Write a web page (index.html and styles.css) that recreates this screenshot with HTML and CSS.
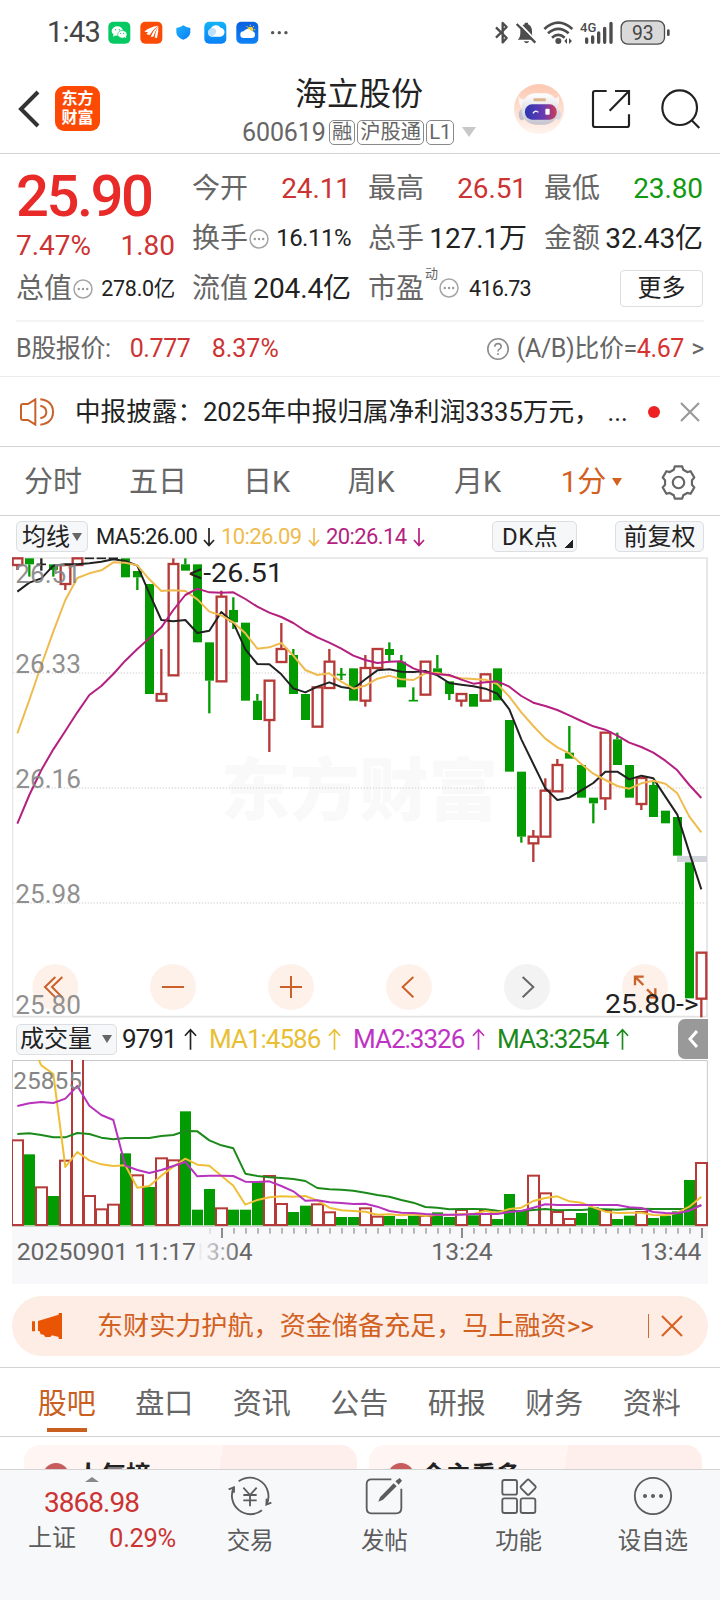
FILE: index.html
```
<!DOCTYPE html>
<html lang="zh-CN">
<head>
  <meta charset="UTF-8">
  <meta name="viewport" content="width=device-width, initial-scale=1.0">
  <title>海立股份 600619</title>
  <link rel="stylesheet" href="styles.css">
</head>
<body>
  <svg class="defs" width="0" height="0">
    <symbol id="arrow-down" viewBox="0 0 12 20"><path d="M6 1v17M1 13l5 5.5 5-5.5" fill="none" stroke="currentColor" stroke-width="1.7"/></symbol>
    <symbol id="arrow-up" viewBox="0 0 14 24"><path d="M7 23V2M1 8l6-6.5L13 8" fill="none" stroke="currentColor" stroke-width="1.8"/></symbol>
    <symbol id="more-dots" viewBox="0 0 20 20"><circle cx="10" cy="10" r="9" fill="none" stroke="#a5a5a5" stroke-width="1.5"/><g fill="#999"><circle cx="5.8" cy="10" r="1.2"/><circle cx="10" cy="10" r="1.2"/><circle cx="14.2" cy="10" r="1.2"/></g></symbol>
  </svg>

  <div class="status-bar">
    <span class="clock">1:43</span>
    <svg class="status-apps" viewBox="320 55 550 80">
      <defs>
        <linearGradient id="cloud" x1="0" y1="0" x2="0" y2="1"><stop offset="0" stop-color="#12b4f5"/><stop offset="1" stop-color="#0a80f8"/></linearGradient>
        <linearGradient id="sky" x1="0" y1="0" x2="0" y2="1"><stop offset="0" stop-color="#0a5ee0"/><stop offset="1" stop-color="#0f83f5"/></linearGradient>
        <linearGradient id="shield" x1="0" y1="0" x2="1" y2="1"><stop offset="0" stop-color="#1fb2fb"/><stop offset="1" stop-color="#0a7df5"/></linearGradient>
      </defs>
      <rect x="324" y="63" width="66" height="66" rx="15" fill="#07c964"/>
      <ellipse cx="351" cy="91" rx="17" ry="14" fill="#fff"/>
      <path d="M340 100l-2 8 9-4z" fill="#fff"/>
      <ellipse cx="366" cy="101" rx="14" ry="11.5" fill="#fff" stroke="#07c964" stroke-width="2"/>
      <path d="M372 109l6 4-2-8z" fill="#fff"/>
      <g fill="#07c964"><circle cx="346" cy="87" r="2"/><circle cx="357" cy="87" r="2"/><circle cx="361" cy="98" r="1.8"/><circle cx="370" cy="98" r="1.8"/></g>
      <rect x="420" y="63" width="66" height="66" rx="15" fill="#fa4c06"/>
      <path d="M432 93q14-14 41-18q-17 7-30 20zM438 101q13-18 35-26q-16 12-25 28zM451 108q8-20 23-33q-9 16-15 33zM463 110q3-18 11-35q1 18-4 38z" fill="#fff"/>
      <path d="M549 74q9 7 21 8v14q-2 14-21 21q-19-7-21-21V82q12-1 21-8z" fill="url(#shield)"/>
      <rect x="612" y="63" width="66" height="66" rx="15" fill="url(#cloud)"/>
      <path d="M634 108a12 12 0 0 1-3-23a17 17 0 0 1 30-4a13 13 0 0 1-4 27z" fill="#fff"/>
      <path d="M634 108a13 13 0 1 1 14-18q-2 14-14 18z" fill="#bfe0fd"/>
      <rect x="708" y="63" width="66" height="66" rx="15" fill="url(#sky)"/>
      <circle cx="750" cy="87" r="9" fill="#f7c93c"/>
      <path d="M750 72v4M761 76l-3 4M765 87h-4M739 76l3 4M761 98l-3-3" stroke="#f7c93c" stroke-width="3"/>
      <path d="M730 112a10 10 0 0 1 0-20a14 14 0 0 1 24 0a10 10 0 0 1 0 20z" fill="#fff"/>
      <g fill="#555"><circle cx="817" cy="96" r="5"/><circle cx="837" cy="96" r="5"/><circle cx="857" cy="96" r="5"/></g>
    </svg>
    <svg class="status-signals" viewBox="400 55 540 80">
      <path d="M409 80l32 32-12 13V67l12 12-32 32" fill="none" stroke="#4d4d4d" stroke-width="7" stroke-linejoin="round"/>
      <path d="M474 117q8-6 8-20v-8q1-17 18-20q16 3 17 20v8q0 14 8 20z" fill="#4d4d4d"/>
      <path d="M492 122h17q-8 12-17 0zM495 66h10v6h-10z" fill="#4d4d4d"/>
      <path d="M477 66l54 56" stroke="#fff" stroke-width="6"/><path d="M471 70l56 56" stroke="#4d4d4d" stroke-width="7"/>
      <g fill="none" stroke="#4d4d4d" stroke-width="8"><path d="M554 85q42-38 84 0M565 98q31-27 62 0M577 111q19-17 38 0"/></g>
      <circle cx="596" cy="121" r="9" fill="#4d4d4d"/>
      <path d="M622 112v18l-8-9zM628 112v18l9-9z" fill="#4d4d4d"/>
      <text x="661" y="94" font-size="40" font-weight="500" textLength="49" lengthAdjust="spacingAndGlyphs" fill="#4d4d4d">4G</text>
      <g stroke="#4d4d4d" stroke-width="10" stroke-linecap="round"><path d="M681 115v10M699 109v16M717 97v28M735 83v42M754 68v57"/></g>
      <rect x="784.500" y="60.500" width="130" height="70" rx="20" fill="#d9d9d9" stroke="#4d4d4d" stroke-width="4"/>
      <path d="M926 90v12" stroke="#4d4d4d" stroke-width="8" stroke-linecap="round"/>
      <text x="817" y="118" font-size="62" textLength="65" lengthAdjust="spacingAndGlyphs" fill="#444">93</text>
    </svg>
  </div>

  <header class="header">
    <svg class="back" viewBox="0 0 22 38"><path d="M20 2L3 19l17 17" fill="none" stroke="#333" stroke-width="4"/></svg>
    <div class="logo">东方<br>财富</div>
    <div class="title">
      <h1>海立股份</h1>
      <div class="subtitle"><span class="code">600619</span><span class="tag">融</span><span class="tag">沪股通</span><span class="tag">L1</span><i class="caret"></i></div>
    </div>
    <svg class="robot" viewBox="0 0 150 150">
      <defs>
        <linearGradient id="peach" x1="0" y1="0" x2="0" y2="1"><stop offset="0" stop-color="#fcc8b0"/><stop offset="1" stop-color="#fff4ef"/></linearGradient>
        <linearGradient id="visor"><stop offset="0" stop-color="#2b35b4"/><stop offset=".6" stop-color="#6a3bb0"/><stop offset="1" stop-color="#d23a55"/></linearGradient>
        <linearGradient id="head" x1="0" y1="0" x2="0" y2="1"><stop offset="0" stop-color="#fff"/><stop offset="1" stop-color="#c6c4cf"/></linearGradient>
      </defs>
      <circle cx="75" cy="75" r="75" fill="url(#peach)"/>
      <ellipse cx="24" cy="92" rx="10" ry="17" fill="#c3c2cb"/><ellipse cx="132" cy="92" rx="9" ry="15" fill="#d9d8e0"/>
      <path d="M14 35q6 14 20 10l12 4-22 24Q12 60 14 35zM134 35q-6 12-18 8l-12 6 22 22q14-16 8-36z" fill="#fbf6f5"/>
      <rect x="23" y="28" width="110" height="94" rx="42" fill="url(#head)"/>
      <rect x="58" y="43" width="38" height="9" rx="4" fill="#dcb48c"/>
      <rect x="33" y="61" width="95" height="46" rx="21" fill="url(#visor)"/>
      <path d="M57 88q8-12 16-3" fill="none" stroke="#fff" stroke-width="4"/><rect x="94" y="74" width="13" height="18" rx="3" fill="#fff"/>
    </svg>
    <svg class="share" viewBox="0 0 120 120"><g fill="none" stroke="#222" stroke-width="6.500"><path d="M47 6H12q-6 0-6 6v96q0 6 6 6h96q6 0 6-6V76"/><path d="M72 6h42v42M114 6L56 65"/></g></svg>
    <svg class="search" viewBox="0 0 120 120"><g fill="none" stroke="#222" stroke-width="6.500"><circle cx="56" cy="56" r="52"/><path d="M92 94l23 23"/></g></svg>
  </header>

  <section class="quote">
    <div class="quote-main">
      <div class="price">25.90</div>
      <div class="change"><span>7.47%</span><span>1.80</span></div>
      <div class="cell"><label>总值</label><svg class="dots"><use href="#more-dots"/></svg><b class="small">278.0亿</b></div>
    </div>
    <div class="quote-grid">
      <div class="cell"><label>今开</label><b class="up">24.11</b></div>
      <div class="cell"><label>最高</label><b class="up">26.51</b></div>
      <div class="cell"><label>最低</label><b class="down">23.80</b></div>
      <div class="cell"><label>换手</label><svg class="dots"><use href="#more-dots"/></svg><b class="mid">16.11%</b></div>
      <div class="cell"><label>总手</label><b>127.1万</b></div>
      <div class="cell"><label>金额</label><b>32.43亿</b></div>
      <div class="cell"><label>流值</label><b>204.4亿</b></div>
      <div class="cell"><label>市盈</label><sup>动</sup><svg class="dots"><use href="#more-dots"/></svg><b class="small pe">416.73</b></div>
      <div class="cell"><button class="more">更多</button></div>
    </div>
  </section>

  <div class="bshare">
    <span>B股报价:</span><span class="red b-price">0.777</span><span class="red b-pct">8.37%</span>
    <svg class="help" viewBox="0 0 22 22"><circle cx="11" cy="11" r="10.200" fill="none" stroke="#8c8c8c" stroke-width="1.600"/><path d="M7.800 8.800q0-3.200 3.200-3.200t3.200 3q0 1.600-1.700 2.500t-1.500 2.400" fill="none" stroke="#8c8c8c" stroke-width="1.600"/><circle cx="11" cy="16" r="1" fill="#8c8c8c"/></svg>
    <span class="ratio">(A/B)比价=<em>4.67</em></span><span class="gt">&gt;</span>
  </div>

  <div class="notice">
    <svg class="speaker" viewBox="0 0 102 84"><g fill="none" stroke="#c9622a" stroke-width="6"><path d="M46 4v76L24 66H9q-6 0-6-6V24q0-6 6-6h15z"/><path d="M61 23q18 4 18 19T61 61M61 4q38 5 38 38T61 80"/></g></svg>
    <p>中报披露：2025年中报归属净利润3335万元，<span class="ellipsis">...</span></p>
    <i class="dot"></i>
    <svg class="close" viewBox="0 0 20 20"><path d="M1 1l18 18M19 1L1 19" stroke="#999" stroke-width="2.200"/></svg>
  </div>

  <nav class="periods">
    <span>分时</span><span>五日</span><span>日K</span><span>周K</span><span>月K</span>
    <span class="active">1分<i></i></span>
    <span><svg class="gear" viewBox="-52 -52 104 104"><g fill="none" stroke="#666" stroke-width="6.500" stroke-linejoin="round"><path d="M11-48L14-38L26-31L36-33.500L47-14.500L40-7V7L47 14.500L36 33.500L26 31L14 38L11 48H-11L-14 38L-26 31L-36 33.500L-47 14.500L-40 7V-7L-47-14.500L-36-33.500L-26-31L-14-38L-11-48Z"/><circle r="17"/></g></svg></span>
  </nav>

  <div class="ma-bar">
    <span class="chip ma-select">均线<i></i></span>
    <span class="ma ma5">MA5:26.00<svg><use href="#arrow-down"/></svg></span>
    <span class="ma ma10">10:26.09<svg><use href="#arrow-down"/></svg></span>
    <span class="ma ma20">20:26.14<svg><use href="#arrow-down"/></svg></span>
    <span class="chip dk">DK点</span>
    <span class="chip fq">前复权</span>
  </div>
  <svg id="kline" class="kline" viewBox="36 321 2088 1383"></svg>

  <div class="vol-bar">
    <span class="chip vol-select">成交量<i></i></span>
    <span class="vol">9791<svg><use href="#arrow-up"/></svg></span>
    <span class="vol v1">MA1:4586<svg><use href="#arrow-up"/></svg></span>
    <span class="vol v2">MA2:3326<svg><use href="#arrow-up"/></svg></span>
    <span class="vol v3">MA3:3254<svg><use href="#arrow-up"/></svg></span>
    <span class="expand"><svg viewBox="0 0 10 18"><path d="M9 1L2 9l7 8" fill="none" stroke="#fff" stroke-width="3"/></svg></span>
  </div>
  <svg id="volume" class="volume" viewBox="36 120 2088 501"></svg>
  <svg id="axis" class="axis" viewBox="36 621 2088 171"></svg>

  <div class="promo">
    <svg class="horn" viewBox="0 0 90 78"><path d="M0 25h9v30H0zM18 24L80 5V0h10v78H80v-6l-20-5-5 5H40l-5-7-9-1-3-9-5-1z" fill="#ea5504"/></svg>
    <span class="promo-text">东财实力护航，资金储备充足，马上融资&gt;&gt;</span>
    <i class="sep"></i>
    <svg class="promo-close" viewBox="0 0 22 22"><path d="M1 1l20 20M21 1L1 21" stroke="#d96327" stroke-width="2.200"/></svg>
  </div>

  <nav class="tabs">
    <span class="active">股吧</span><span>盘口</span><span>资讯</span><span>公告</span><span>研报</span><span>财务</span><span>资料</span>
  </nav>

  <div class="cards">
    <div class="card"><i></i>人气榜</div>
    <div class="card"><i></i>今主看多</div>
  </div>

  <footer class="bottom-nav">
    <div class="index">
      <i></i>
      <div class="index-value">3868.98</div>
      <div class="index-row"><span>上证</span><span class="red">0.29%</span></div>
    </div>
    <div class="item">
      <svg class="nav-icon" viewBox="-66 -60 132 120"><g fill="none" stroke="#5c5c5c" stroke-width="5.500"><path d="M-34-44A56 56 0 0 1 50 25M36 43A56 56 0 0 1-48-27"/><path d="M64 20L49 26L50 8M-64-20L-48-26V-10"/><path d="M-20-25L0-3L20-25M0-3V31M-20-3H20M-20 13H20"/></g></svg>
      <span>交易</span>
    </div>
    <div class="item">
      <svg class="nav-icon" viewBox="-66 -60 132 120"><g fill="none" stroke="#5c5c5c" stroke-width="5.500"><path d="M22-50H-38q-14 0-14 14V36q0 16 14 16H36q16 0 16-16V-22"/></g><path d="M-17 17L-12 4L29-38L38-29L-3 11zM34-44L47-54L54-46L44-34z" fill="#5c5c5c"/></svg>
      <span>发帖</span>
    </div>
    <div class="item">
      <svg class="nav-icon" viewBox="-66 -60 132 120"><g fill="none" stroke="#5c5c5c" stroke-width="5.500"><rect x="-50" y="-48" width="44" height="44" rx="6"/><rect x="-50" y="7" width="44" height="44" rx="6"/><rect x="5" y="7" width="44" height="44" rx="6"/><rect x="10" y="-44" width="35" height="35" rx="5" transform="rotate(45 27.500 -26.500)"/></g></svg>
      <span>功能</span>
    </div>
    <div class="item">
      <svg class="nav-icon" viewBox="-66 -60 132 120"><circle r="54.500" fill="none" stroke="#5c5c5c" stroke-width="5.500"/><g fill="#5c5c5c"><circle cx="-24" r="6"/><circle r="6"/><circle cx="24" r="6"/></g></svg>
      <span>设自选</span>
    </div>
  </footer>

  <script src="chart.js"></script>
</body>
</html>
```
FILE: styles.css
```
* {
  box-sizing: border-box;
}
body {
  margin: 0;
  width: 720px;
  height: 1600px;
  overflow: hidden;
  background: #fff;
  color: #222;
  font-family: Roboto, "Noto Sans CJK SC", sans-serif;
  font-size: 24px;
}
svg {
  display: block;
  flex: none;
}
i {
  display: block;
  flex: none;
}
.defs {
  position: absolute;
}
.red {
  color: #cc3333;
}

/* status bar */
.status-bar {
  display: flex;
  align-items: center;
  height: 64px;
  padding-left: 47px;
}
.clock {
  width: 60px;
  font-size: 29px;
  line-height: 64px;
  letter-spacing: -0.700px;
  color: #444;
}
.status-apps {
  width: 183.3px;
  height: 26.7px;
}
.status-signals {
  width: 180px;
  height: 26.7px;
  margin-left: 203px;
}

/* header */
.header {
  display: flex;
  align-items: center;
  height: 90px;
  border-bottom: 1px solid #d3d3d3;
}
.back {
  width: 22px;
  height: 38px;
  margin-left: 18px;
}
.logo {
  width: 45px;
  height: 45px;
  margin-left: 15px;
  padding-top: 4px;
  border-radius: 9px;
  background: #fc4a04;
  color: #fff;
  font-size: 16px;
  font-weight: 700;
  line-height: 18.5px;
  text-align: center;
}
.title {
  flex: 1;
  padding: 3px 0 0 142px;
}
.title h1 {
  margin: 0;
  padding-left: 53px;
  font-size: 32px;
  font-weight: 400;
  line-height: 44px;
}
.subtitle {
  display: flex;
  align-items: center;
  height: 33px;
  color: #666;
}
.code {
  width: 87px;
  font-size: 25px;
  letter-spacing: -0.100px;
}
.tag {
  height: 25px;
  margin-right: 2px;
  padding: 0 2px;
  border: 1px solid #888;
  border-radius: 5px;
  font-size: 20.300px;
  line-height: 22px;
}
.caret {
  margin-left: 6px;
  border: 7px solid transparent;
  border-top: 10px solid #c8c8c8;
  border-bottom: 0;
}
.robot {
  width: 50px;
  height: 50px;
}
.share {
  width: 40px;
  height: 40px;
  margin-left: 27px;
}
.search {
  width: 40px;
  height: 40px;
  margin: 0 19px 0 30px;
}

/* quote */
.quote {
  display: flex;
  gap: 17px;
  height: 168px;
  margin: 0 16px;
  padding-top: 10px;
  border-bottom: 2px solid #f4f4f6;
}
.quote-main {
  width: 159px;
}
.quote-grid {
  flex: 1;
  display: grid;
  grid-template-columns: repeat(3, 159px);
  grid-auto-rows: 49.700px;
  column-gap: 17px;
}
.price {
  height: 65px;
  font-size: 58px;
  font-weight: 500;
  line-height: 64px;
  letter-spacing: -2.500px;
  color: #e82a28;
}
.change {
  display: flex;
  justify-content: space-between;
  height: 35px;
  font-size: 28px;
  line-height: 34px;
  color: #cc3333;
}
.cell {
  display: flex;
  align-items: center;
  height: 49.700px;
  line-height: 49px;
  white-space: nowrap;
}
.cell label {
  font-size: 28px;
  color: #666;
}
.cell b {
  margin-left: auto;
  font-size: 28px;
  font-weight: 400;
  letter-spacing: -0.100px;
}
.cell b.mid {
  font-size: 24px;
  letter-spacing: -0.500px;
}
.cell b.small {
  font-size: 21.500px;
  letter-spacing: -0.300px;
}
.cell b.pe {
  margin: 0 auto 0 10px;
  letter-spacing: -0.700px;
}
.cell b.up {
  color: #cc3333;
}
.cell b.down {
  color: #119911;
}
.cell sup {
  align-self: flex-start;
  margin-left: 1px;
  font-size: 13px;
  line-height: 22px;
  color: #666;
}
.dots {
  width: 20px;
  height: 20px;
  margin-left: 1px;
}
.more {
  width: 83px;
  height: 37px;
  margin-left: auto;
  padding: 0;
  border: 1px solid #ddd;
  border-radius: 4px;
  background: #fff;
  color: #222;
  font: inherit;
  line-height: 33px;
}

/* B share row */
.bshare {
  display: flex;
  align-items: center;
  height: 55px;
  padding: 0 16px;
  border-bottom: 1px solid #ececec;
  font-size: 25px;
  line-height: 52px;
  color: #666;
  letter-spacing: -0.400px;
}
.b-price {
  width: 82px;
  margin-left: 19px;
}
.b-pct {
  letter-spacing: 0;
}
.help {
  width: 22px;
  height: 22px;
  margin: 0 8px 0 auto;
}
.ratio em {
  font-style: normal;
  color: #d6322f;
}
.gt {
  width: 20px;
  text-align: right;
}

/* notice */
.notice {
  display: flex;
  align-items: center;
  height: 70px;
  padding: 0 20px;
  border-bottom: 1px solid #d3d3d3;
}
.speaker {
  width: 34px;
  height: 28px;
}
.notice p {
  flex: 1;
  margin: 0 0 0 21px;
  font-size: 25.600px;
  line-height: 68px;
  white-space: nowrap;
}
.ellipsis {
  margin-left: 8px;
}
.dot {
  width: 12px;
  height: 12px;
  border-radius: 50%;
  background: #ee2222;
}
.close {
  width: 20px;
  height: 20px;
  margin-left: 20px;
}

/* period tabs */
.periods {
  display: grid;
  grid-template-columns: 106px 104px 113px 96px 117px 111px 63px;
  height: 69px;
  border-bottom: 1px solid #d3d3d3;
  font-size: 29px;
  line-height: 68px;
  color: #666;
}
.periods span {
  display: flex;
  align-items: center;
  justify-content: center;
  padding-top: 1px;
}
.periods .active {
  color: #d2601f;
}
.periods i {
  margin-left: 6px;
  border: 5px solid transparent;
  border-top: 8px solid #d2601f;
  border-bottom: 0;
}
.gear {
  width: 35px;
  height: 35px;
}

/* moving averages */
.ma-bar {
  display: flex;
  align-items: center;
  height: 41px;
  padding: 0 16px;
}
.chip {
  display: flex;
  align-items: center;
  height: 31px;
  border: 1px solid #dcdee2;
  border-radius: 5px;
  background: #f6f7f9;
  font-size: 24px;
  line-height: 28px;
  white-space: nowrap;
}
.chip i {
  border: 5px solid transparent;
  border-top: 8px solid #666;
  border-bottom: 0;
}
.ma-select {
  width: 72px;
  padding-left: 5px;
}
.ma-select i {
  margin-left: 2px;
}
.ma {
  display: flex;
  align-items: center;
  font-size: 22px;
  letter-spacing: -0.600px;
}
.ma svg {
  width: 12px;
  height: 20px;
  margin-left: 6px;
}
.ma5 {
  width: 125px;
  margin-left: 8px;
}
.ma10 {
  width: 105px;
  color: #f0bb4e;
}
.ma20 {
  width: 166px;
  color: #b51f80;
}
.dk {
  width: 85px;
  padding-left: 9px;
  letter-spacing: 0.500px;
  background: linear-gradient(135deg, transparent 50%, #222 50%) 72px 18px / 8px 8px no-repeat #f6f7f9;
}
.fq {
  width: 89px;
  margin-left: auto;
  justify-content: center;
}
.kline {
  width: 696px;
  height: 461px;
  margin-left: 12px;
}

/* volume */
.vol-bar {
  display: flex;
  align-items: center;
  height: 42px;
  padding: 0 12px 0 16px;
}
.vol-select {
  width: 101px;
  padding-left: 3px;
}
.vol-select i {
  margin-left: 10px;
}
.vol {
  display: flex;
  align-items: center;
  width: 144px;
  font-size: 26px;
  letter-spacing: -1px;
}
.vol svg {
  width: 13px;
  height: 23px;
  margin-left: 8px;
}
.vol-select + .vol {
  width: 87px;
  margin-left: 5px;
}
.v1 {
  color: #e8bf35;
}
.v2 {
  color: #bf33c4;
}
.v3 {
  color: #1b8a1b;
}
.expand {
  display: flex;
  align-items: center;
  justify-content: center;
  width: 30px;
  height: 40px;
  margin-left: auto;
  border-radius: 7px 0 0 7px;
  background: #999;
}
.expand svg {
  width: 10px;
  height: 18px;
}
.volume {
  width: 696px;
  height: 167px;
  margin-left: 12px;
}
.axis {
  width: 696px;
  height: 57px;
  margin-left: 12px;
  background: #f8f8fa;
}

/* promo banner */
.promo {
  display: flex;
  align-items: center;
  height: 60px;
  margin: 12px 12px 11px;
  padding: 0 25px 0 20px;
  border-radius: 30px;
  background: #fdede4;
  color: #d2601f;
}
.horn {
  width: 30px;
  height: 26px;
}
.promo-text {
  flex: 1;
  margin-left: 35px;
  font-size: 26.100px;
  line-height: 58px;
  white-space: nowrap;
}
.sep {
  width: 1px;
  height: 24px;
  margin-right: 12px;
  background: #cc6a35;
}
.promo-close {
  width: 22px;
  height: 22px;
}

/* content tabs */
.tabs {
  display: grid;
  grid-template-columns: repeat(7, 97.500px);
  height: 70px;
  padding-left: 18px;
  border-top: 1px solid #d3d3d3;
  border-bottom: 1px solid #d3d3d3;
  font-size: 29px;
  line-height: 72px;
  text-align: center;
  color: #666;
}
.tabs .active {
  color: #c9601f;
  background: linear-gradient(#c9601f, #c9601f) center 60px / 40px 4px no-repeat;
}

.cards {
  display: grid;
  grid-template-columns: 333px 333px;
  gap: 12px;
  height: 32px;
  padding: 8px 0 0 24px;
  overflow: hidden;
}
.card {
  display: flex;
  align-items: center;
  height: 62px;
  border-radius: 16px;
  background: linear-gradient(100deg, #fff5f3 58%, #ffefec 58%);
  font-size: 25px;
  font-weight: 700;
  line-height: 30px;
}
.card i {
  width: 26px;
  height: 26px;
  margin: 0 7px 0 19px;
  border-radius: 50%;
  background: #c85c5c;
}

/* bottom navigation */
.bottom-nav {
  display: grid;
  grid-template-columns: 183px repeat(4, 1fr);
  height: 131px;
  border-top: 1px solid #d3d3d3;
  background: #f7f8fa;
  color: #5c5c5c;
}
.index i {
  width: 14px;
  margin: 7px auto 0;
  border: 7px solid transparent;
  border-bottom: 5px solid #888;
  border-top: 0;
}
.index-value {
  font-size: 28px;
  line-height: 42px;
  text-align: center;
  letter-spacing: -1px;
  color: #cc3333;
}
.index-row {
  display: flex;
  justify-content: space-between;
  padding: 0 7px 0 28px;
  font-size: 24px;
  line-height: 28px;
}
.index-row .red {
  font-size: 25.500px;
  letter-spacing: -0.300px;
}
.item {
  display: flex;
  flex-direction: column;
  align-items: center;
  font-size: 23.500px;
  line-height: 34px;
}
.nav-icon {
  width: 44px;
  height: 40px;
  margin: 6px 0 8px;
}
```
FILE: chart.js
```
// all coordinates below are in viewBox units, 3 units = 1px
const STEP = 36;
const X0 = 52;
const RED = '#b53a38';
const GREEN = '#029c02';

// [type, high, top, bottom, low]
const candles = [
  ['r', 325, 325, 345, 360], ['g', 325, 325, 343, 380], ['k', 325, 343, 343, 362], ['g', 343, 343, 360, 380],
  ['r', 345, 345, 402, 420], ['r', 325, 325, 345, 345], ['k', 325, 325, 325, 325], ['k', 325, 325, 325, 325],
  ['k', 325, 325, 325, 325], ['g', 325, 325, 382, 382], ['g', 363, 363, 382, 420], ['g', 402, 402, 732, 732],
  ['r', 597, 732, 752, 752], ['r', 325, 342, 676, 676], ['g', 325, 343, 362, 362], ['g', 343, 343, 577, 577],
  ['g', 577, 577, 692, 790], ['r', 422, 440, 694, 694], ['g', 442, 480, 517, 537], ['g', 518, 518, 752, 752],
  ['g', 732, 752, 810, 810], ['r', 692, 692, 810, 906], ['r', 519, 597, 636, 636], ['g', 597, 615, 732, 732],
  ['g', 732, 732, 810, 810], ['r', 712, 712, 830, 830], ['r', 597, 635, 714, 714], ['g', 654, 674, 674, 690],
  ['g', 655, 655, 752, 752], ['r', 615, 654, 752, 770], ['r', 597, 597, 654, 654], ['g', 577, 597, 615, 633],
  ['g', 615, 635, 712, 712], ['g', 712, 752, 752, 752], ['r', 635, 635, 734, 734], ['g', 615, 655, 672, 672],
  ['g', 694, 694, 732, 750], ['r', 732, 732, 752, 770], ['g', 732, 732, 770, 770], ['r', 673, 673, 752, 752],
  ['g', 655, 655, 751, 751], ['g', 810, 810, 965, 965], ['g', 965, 965, 1160, 1178], ['r', 1140, 1160, 1180, 1236],
  ['r', 985, 1022, 1160, 1160], ['r', 927, 945, 1024, 1024], ['g', 828, 908, 926, 926], ['g', 945, 945, 1043, 1043],
  ['g', 1043, 1043, 1060, 1120], ['r', 848, 848, 1045, 1080], ['g', 848, 868, 945, 945], ['g', 945, 945, 1043, 1043],
  ['r', 984, 984, 1062, 1080], ['g', 993, 1005, 1101, 1101], ['g', 1082, 1082, 1120, 1120], ['g', 1101, 1101, 1217, 1217],
  ['g', 1237, 1237, 1645, 1645], ['r', 1508, 1508, 1646, 1702]
];

const ma5 = [425, 398, 385, 347, 343, 343, 340, 335, 328, 333, 347, 430, 510, 514, 510, 549, 542, 486, 518, 598,
  642, 643, 673, 715, 727, 710, 697, 711, 716, 688, 661, 658, 665, 666, 663, 676, 699, 704, 709, 716,
  731, 778, 868, 942, 1015, 1050, 1043, 1021, 999, 965, 965, 988, 977, 985, 1040, 1094, 1208, 1318];
const ma10 = [850, 750, 645, 545, 450, 384, 370, 361, 337, 338, 346, 388, 423, 421, 423, 448, 485, 496, 517, 550,
  596, 592, 579, 617, 660, 675, 670, 695, 716, 707, 686, 677, 688, 690, 670, 668, 678, 685, 687, 689,
  702, 740, 787, 828, 866, 892, 910, 942, 971, 990, 1008, 1016, 1000, 992, 1001, 1030, 1100, 1147];
const ma20 = [1121, 1035, 960, 898, 843, 787, 735, 708, 672, 632, 597, 565, 532, 480, 435, 416, 427, 428, 427, 447,
  470, 488, 501, 519, 543, 562, 578, 596, 617, 630, 639, 635, 634, 655, 667, 673, 675, 689, 701, 697,
  694, 710, 738, 758, 768, 780, 796, 813, 829, 839, 857, 878, 891, 908, 932, 961, 1005, 1044];

const volTypes = 'rgrgrrrrrgrgrrgggrgggrrggrrggrrgggrggrgrgggrrrrggrggrggggr';
const volTops = [361, 403, 502, 528, 422, 60, 528, 568, 554, 400, 466, 501, 415, 421, 274, 569, 507, 565, 569, 569,
  487, 468, 552, 576, 557, 553, 577, 591, 591, 565, 590, 588, 597, 587, 588, 577, 591, 570, 586, 570,
  597, 522, 572, 467, 520, 576, 597, 579, 562, 570, 597, 587, 576, 594, 587, 574, 480, 429];
const vma1 = [-150, 60, 136, 162, 441, 396, 421, 433, 438, 436, 503, 498, 467, 440, 416, 434, 437, 467, 497, 554,
  540, 532, 529, 530, 528, 541, 563, 571, 573, 575, 584, 583, 586, 583, 588, 584, 585, 582, 582, 573,
  578, 567, 563, 543, 534, 529, 544, 548, 562, 575, 579, 578, 578, 585, 586, 578, 560, 530];
const vma2 = [258, 250, 246, 249, 236, 198, 257, 285, 300, 437, 450, 459, 450, 438, 426, 469, 467, 467, 468, 485,
  486, 484, 498, 514, 542, 541, 547, 549, 552, 551, 560, 573, 578, 579, 582, 584, 584, 584, 582, 582,
  582, 576, 573, 563, 553, 555, 555, 555, 555, 555, 555, 562, 564, 576, 579, 580, 572, 555];
const vma3 = [342, 340, 345, 352, 352, 339, 342, 353, 358, 354, 354, 354, 348, 345, 333, 334, 361, 376, 385, 461,
  468, 472, 474, 477, 483, 504, 508, 509, 512, 518, 525, 530, 540, 548, 561, 563, 568, 567, 567, 568,
  572, 573, 573, 570, 567, 571, 570, 570, 568, 568, 569, 567, 566, 567, 567, 567, 567, 556];

const xAt = i => X0 + STEP * i;

function line(values, color) {
  const points = values.map((y, i) => `${xAt(i)},${y}`).join(' ');
  return `<polyline points="${points}" fill="none" stroke="${color}" stroke-width="6" stroke-linejoin="round"/>`;
}

function text(x, y, width, str, color, size) {
  return `<text x="${x}" y="${y}" font-size="${size}" textLength="${width}" lengthAdjust="spacingAndGlyphs" fill="${color}">${str}</text>`;
}

function candle([type, high, top, bottom, low], i) {
  const x = xAt(i);
  const color = type === 'r' ? RED : type === 'g' ? GREEN : '#222';
  let s = '';
  if (high < top) s += `<path d="M${x} ${high}V${top}" stroke="${color}" stroke-width="7"/>`;
  if (low > bottom) s += `<path d="M${x} ${bottom}V${low}" stroke="${color}" stroke-width="7"/>`;
  if (top === bottom) {
    s += `<path d="M${x - 14} ${top}h28" stroke="${color}" stroke-width="5"/>`;
  } else if (type === 'r') {
    s += `<rect x="${x - 14}" y="${top}" width="29" height="${bottom - top}" fill="#fff" stroke="${RED}" stroke-width="7"/>`;
  } else {
    s += `<rect x="${x - 13}" y="${top}" width="27" height="${bottom - top}" fill="${GREEN}"/>`;
  }
  return s;
}

function drawKline() {
  let s = '<text x="662" y="1095" font-size="205" font-weight="900" textLength="832" lengthAdjust="spacingAndGlyphs" fill="#f9f9f9">东方财富</text>';
  [669, 1014, 1359].forEach(y => {
    s += `<path d="M38 ${y}H2122" stroke="#dedede" stroke-width="4" stroke-dasharray="4 5"/>`;
  });
  s += '<path d="M38 324H2121V1700H38" fill="none" stroke="#e3e3e3" stroke-width="5"/><path d="M38 324V1700" stroke="#e0e0e0" stroke-width="3"/>';

  // toolbar buttons under the candles
  [166, 519, 873, 1227, 1581, 1935].forEach((x, i) => {
    s += `<circle cx="${x}" cy="1611" r="69" fill="${i === 4 ? '#f3f3f4' : '#fef1ea'}"/>`;
  });
  s += `<g fill="none" stroke="#cb6029" stroke-width="6">
    <path d="M166 1581L135 1611L166 1642M187 1581L156 1611L187 1642"/>
    <path d="M486 1611H552M840 1611H906M873 1578V1644M1240 1581L1208 1611L1240 1642"/>
    <path d="M1931 1580H1905V1606M1905 1580L1930 1605M1941 1642H1966V1615M1966 1642L1941 1618" stroke-width="7"/>
    <path d="M1568 1581L1600 1611L1568 1642" stroke="#666"/></g>`;

  s += candles.map(candle).join('');
  s += '<rect x="2031" y="1218" width="90" height="18" fill="#d2d5dc"/>';
  s += line(ma5, '#222') + line(ma10, '#f0bb4e') + line(ma20, '#b51f80');
  s += '<g opacity=".9">';
  [['26.51', 400], ['26.33', 669], ['26.16', 1013], ['25.98', 1358], ['25.80', 1692]].forEach(([label, y]) => {
    s += text(46, y, 197, label, '#858585', 80);
  });
  s += '</g>';
  s += text(566, 396, 283, '&lt;-26.51', '#222', 80);
  s += text(1815, 1688, 281, '25.80-&gt;', '#222', 80);
  document.getElementById('kline').innerHTML = s;
}

function drawVolume() {
  let s = '<path d="M37 621V121.500H2122V621" fill="none" stroke="#c8c8c8" stroke-width="3"/><path d="M37 619H2122" stroke="#c8c8c8" stroke-width="3"/>';
  volTops.forEach((top, i) => {
    const x = xAt(i);
    if (volTypes[i] === 'r') {
      s += `<rect x="${x - 16}" y="${top}" width="33" height="${615 - top}" fill="#fff" stroke="${RED}" stroke-width="6"/>`;
    } else {
      s += `<rect x="${x - 16}" y="${top}" width="33" height="${616 - top}" fill="${GREEN}"/>`;
    }
  });
  s += line(vma3, '#1b8a1b') + line(vma1, '#efbf38') + line(vma2, '#b833bd');
  s += text(40, 207, 206, '25855', '#858585', 74);
  document.getElementById('volume').innerHTML = s;
}

function drawAxis() {
  let s = '<defs><linearGradient id="fade" gradientUnits="userSpaceOnUse" x1="590" y1="0" x2="720" y2="0"><stop offset="0" stop-color="#666" stop-opacity="0"/><stop offset="1" stop-color="#666"/></linearGradient></defs>';
  for (let i = 16; i <= 57; i++) {
    const major = (i - 17) % 20 === 0;
    s += `<path d="M${54 + STEP * i} 624v${major ? 30 : 17}" stroke="${major ? '#777' : i === 16 ? '#ddd' : '#aaa'}" stroke-width="5"/>`;
  }
  s += text(50, 719, 538, '20250901 11:17', '#666', 72);
  s += text(578, 719, 180, '13:04', 'url(#fade)', 72);
  s += text(1294, 719, 184, '13:24', '#666', 72);
  s += text(1920, 719, 184, '13:44', '#666', 72);
  document.getElementById('axis').innerHTML = s;
}

drawKline();
drawVolume();
drawAxis();
```
